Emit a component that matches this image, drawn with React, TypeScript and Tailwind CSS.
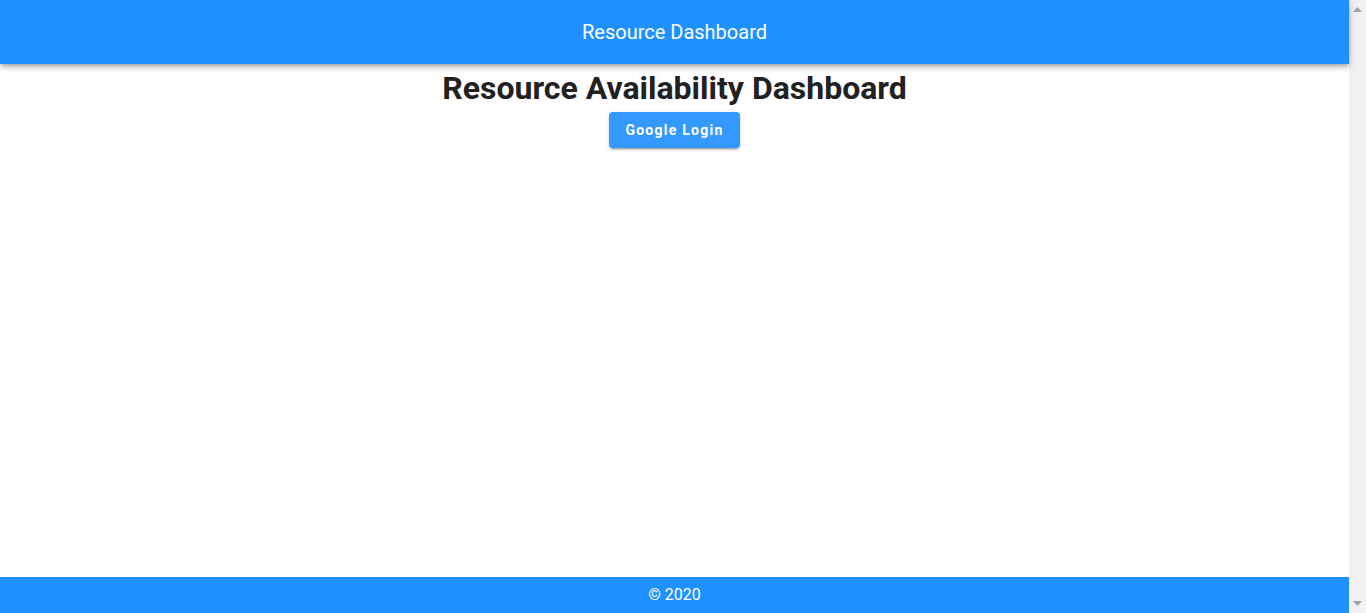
import React from "react";

export default function App() {
  return (
    <div className="flex h-[613px] w-[1366px] overflow-hidden" style={{ fontFamily: "Roboto, 'Liberation Sans', sans-serif" }}>
      <div className="flex w-[1349px] flex-col bg-white">
        <header className="relative z-10 flex h-16 shrink-0 items-center justify-center bg-[#1e90ff] shadow-[0_2px_4px_-1px_rgba(0,0,0,0.2),0_4px_5px_0_rgba(0,0,0,0.14),0_1px_10px_0_rgba(0,0,0,0.12)]">
          <span className="text-[20px] text-white">Resource Dashboard</span>
        </header>
        <main className="flex flex-1 flex-col items-center">
          <h1 className="mt-[5px] text-[32px] font-bold leading-[38px] text-[#212121]">Resource Availability Dashboard</h1>
          <button className="mt-[5px] h-9 w-[131px] rounded-[4px] bg-[#3399ff] text-[14px] font-bold tracking-[0.09em] text-white shadow-[0_3px_1px_-2px_rgba(0,0,0,0.2),0_2px_2px_0_rgba(0,0,0,0.14),0_1px_5px_0_rgba(0,0,0,0.12)]">
            Google Login
          </button>
        </main>
        <footer className="flex h-9 shrink-0 items-center justify-center bg-[#1e90ff]">
          <span className="text-[16px] text-white">© 2020</span>
        </footer>
      </div>
      <div className="flex w-[17px] flex-col items-center justify-between bg-[#f1f1f1] py-[7px]">
        <svg width="9" height="5" viewBox="0 0 9 5"><polygon points="4.5,0 9,5 0,5" fill="#a3a3a3" /></svg>
        <svg width="9" height="5" viewBox="0 0 9 5"><polygon points="0,0 9,0 4.5,5" fill="#a3a3a3" /></svg>
      </div>
    </div>
  );
}
